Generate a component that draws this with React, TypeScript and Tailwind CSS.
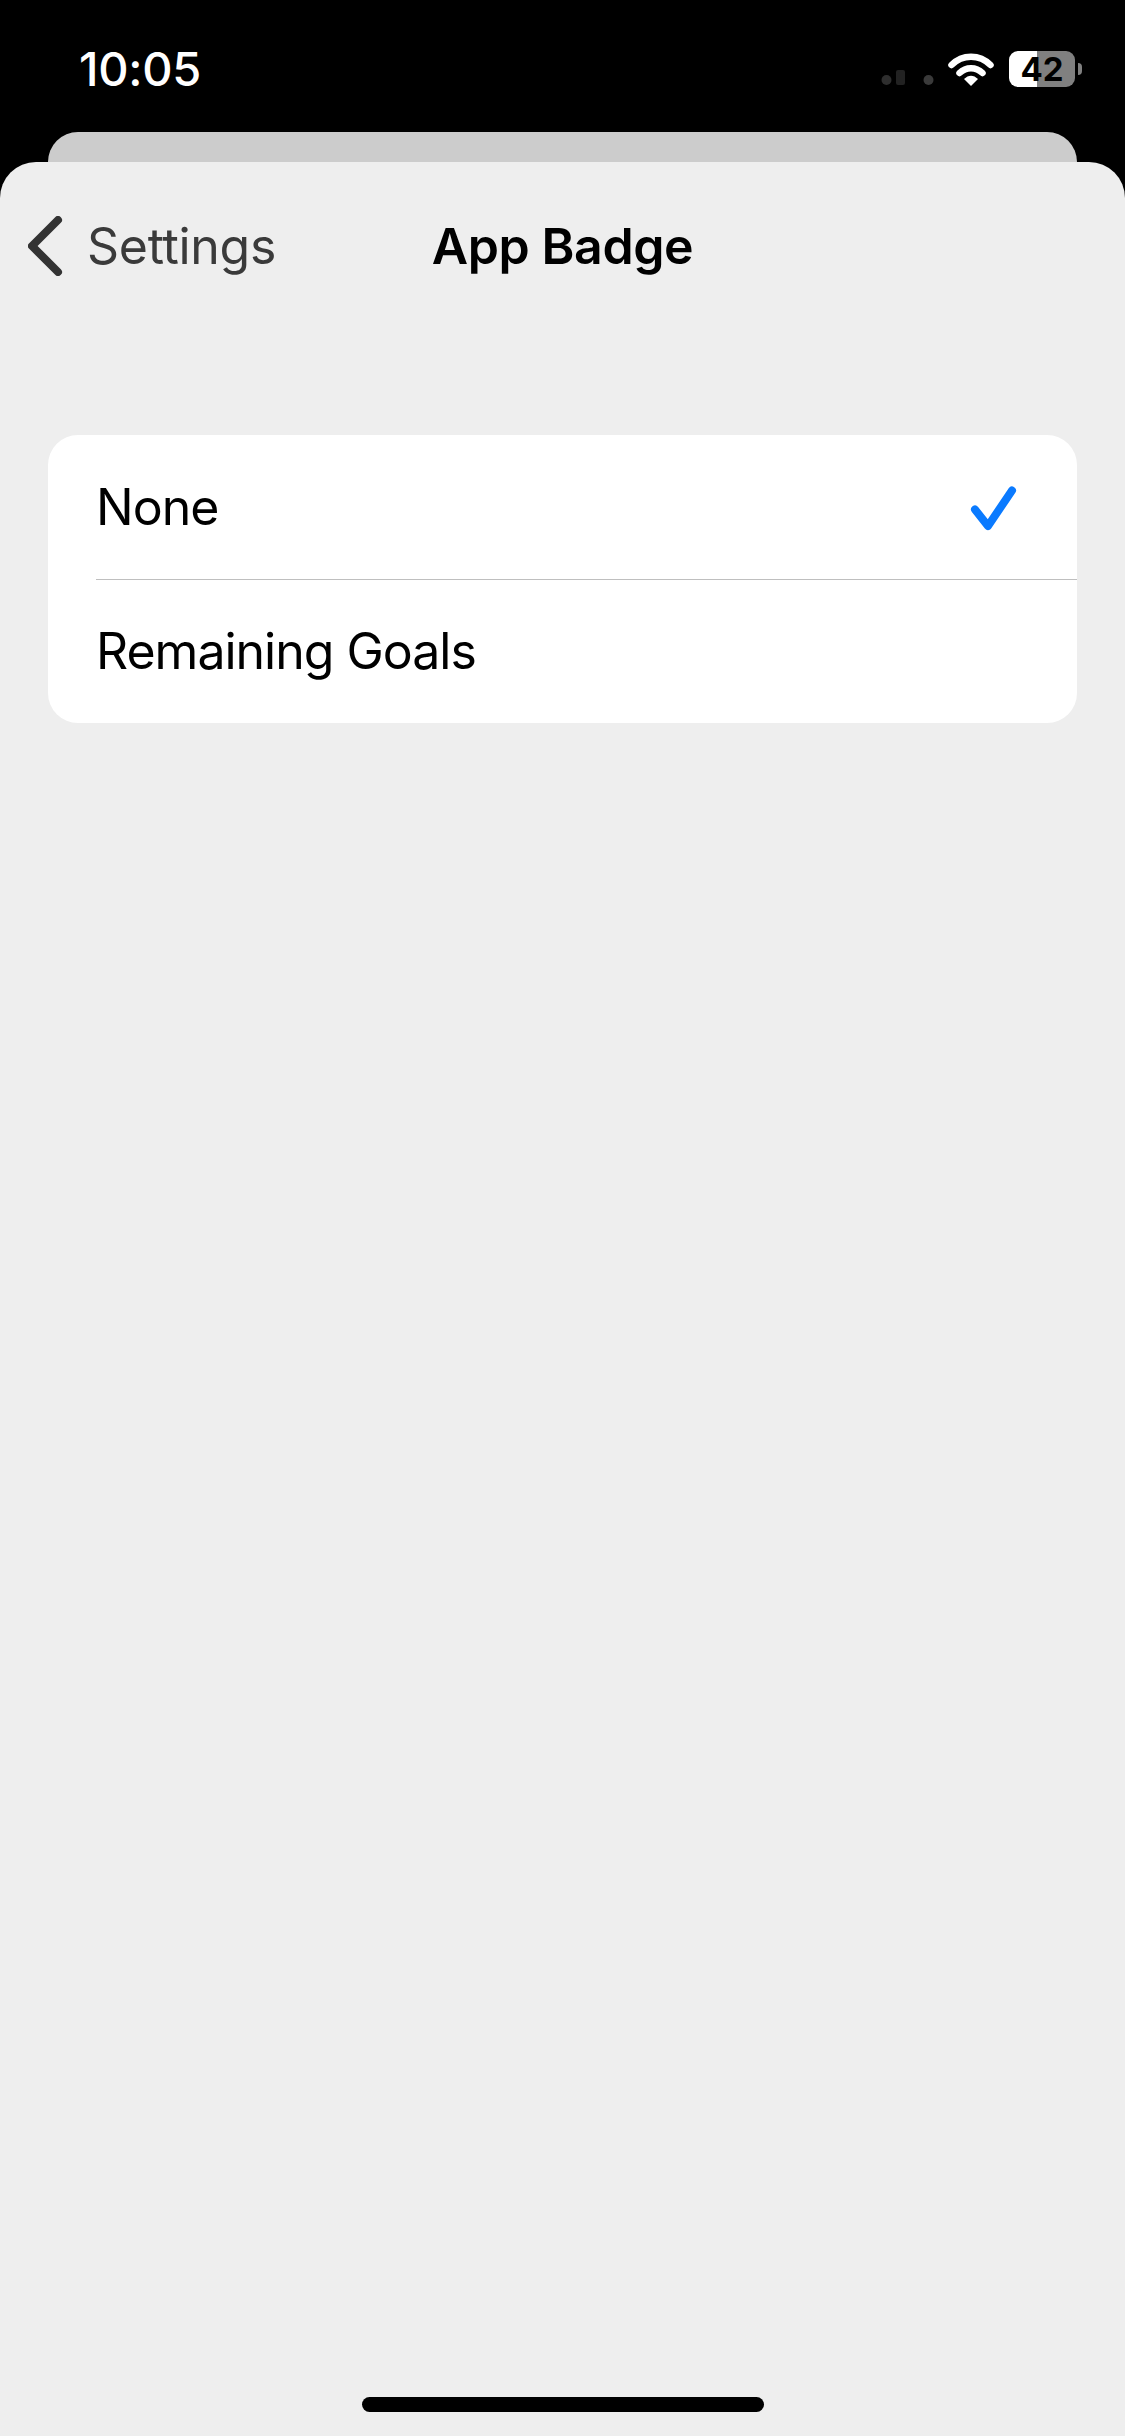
const options = [
  { label: 'None', selected: true },
  { label: 'Remaining Goals', selected: false },
];

function StatusBar() {
  return (
    <div className="flex h-[132px] items-start justify-between pl-[79px] pr-[43px] text-white">
      <span className="mt-[42px] text-[47px] font-medium leading-[54px] tracking-[-0.3px]">10:05</span>
      <div className="mt-[51px] flex items-start">
        <svg className="mt-[16px] mr-[14px]" width="54" height="20" viewBox="0 0 54 20">
          <circle cx="6.5" cy="13" r="5" fill="#2e2e2e" />
          <rect x="16" y="3" width="9" height="15" rx="2" fill="#222222" />
          <circle cx="48.5" cy="13" r="5" fill="#3a3a3a" />
        </svg>
        <svg className="mr-[15px]" width="46" height="36" viewBox="0 0 46 36">
          <path d="M3.5 14C14.5 3 31.5 3 42.5 14" fill="none" stroke="#fff" strokeWidth="6.5" strokeLinecap="round" />
          <path d="M11.5 22C18 15.5 28 15.5 34.5 22" fill="none" stroke="#fff" strokeWidth="6.5" strokeLinecap="round" />
          <path d="M16 28C20.5 23.5 25.5 23.5 30 28L23 35Z" fill="#fff" />
        </svg>
        <div className="flex items-center">
          <div className="flex h-[36px] w-[66px] items-center justify-center rounded-[9px] bg-[linear-gradient(90deg,#ffffff_42%,#808080_42%)] text-[33px] font-bold leading-none text-black">
            42
          </div>
          <div className="ml-[3px] h-[12px] w-[4px] rounded-r-full bg-[#808080]" />
        </div>
      </div>
    </div>
  );
}

export default function App() {
  return (
    <div className="flex h-screen flex-col bg-black font-['Inter',sans-serif]">
      <StatusBar />
      <div className="mx-[48px] h-[30px] rounded-t-[30px] bg-[#cccccc]" />

      <div className="flex flex-1 flex-col rounded-t-[36px] bg-[#eeeeee]">
        <header className="grid h-[168px] grid-cols-[1fr_auto_1fr] items-center pb-[1px]">
          <div className="flex items-center pl-[28px]">
            <svg width="36" height="60" viewBox="0 0 36 60">
              <path d="M30 4L4 30L30 56" fill="none" stroke="#333333" strokeWidth="8" strokeLinecap="round" strokeLinejoin="round" />
            </svg>
            <span className="ml-[23px] text-[50px] leading-none tracking-[-0.3px] text-[#3a3a3a]">Settings</span>
          </div>
          <h1 className="text-[50px] font-semibold leading-none tracking-[-0.4px] text-black">App Badge</h1>
          <div />
        </header>

        <div className="mx-[48px] mt-[105px] overflow-hidden rounded-[30px] bg-white">
          {options.map((option, index) => (
            <div key={option.label} className="pl-[48px]">
              {index > 0 && <div className="h-[1px] bg-[#bfbfbf]" />}
              <div className="flex h-[143.5px] items-center justify-between pr-[58px]">
                <span className="text-[50px] leading-none tracking-[-1px] text-black">{option.label}</span>
                {option.selected && (
                  <svg width="50" height="50" viewBox="0 0 50 50">
                    <path d="M6 27.5L19 44L43 8.5" fill="none" stroke="#0a7aff" strokeWidth="8" strokeLinecap="round" strokeLinejoin="round" />
                  </svg>
                )}
              </div>
            </div>
          ))}
        </div>

        <div className="mt-auto flex justify-center pb-[24px]">
          <div className="h-[15px] w-[402px] rounded-full bg-black" />
        </div>
      </div>
    </div>
  );
}
